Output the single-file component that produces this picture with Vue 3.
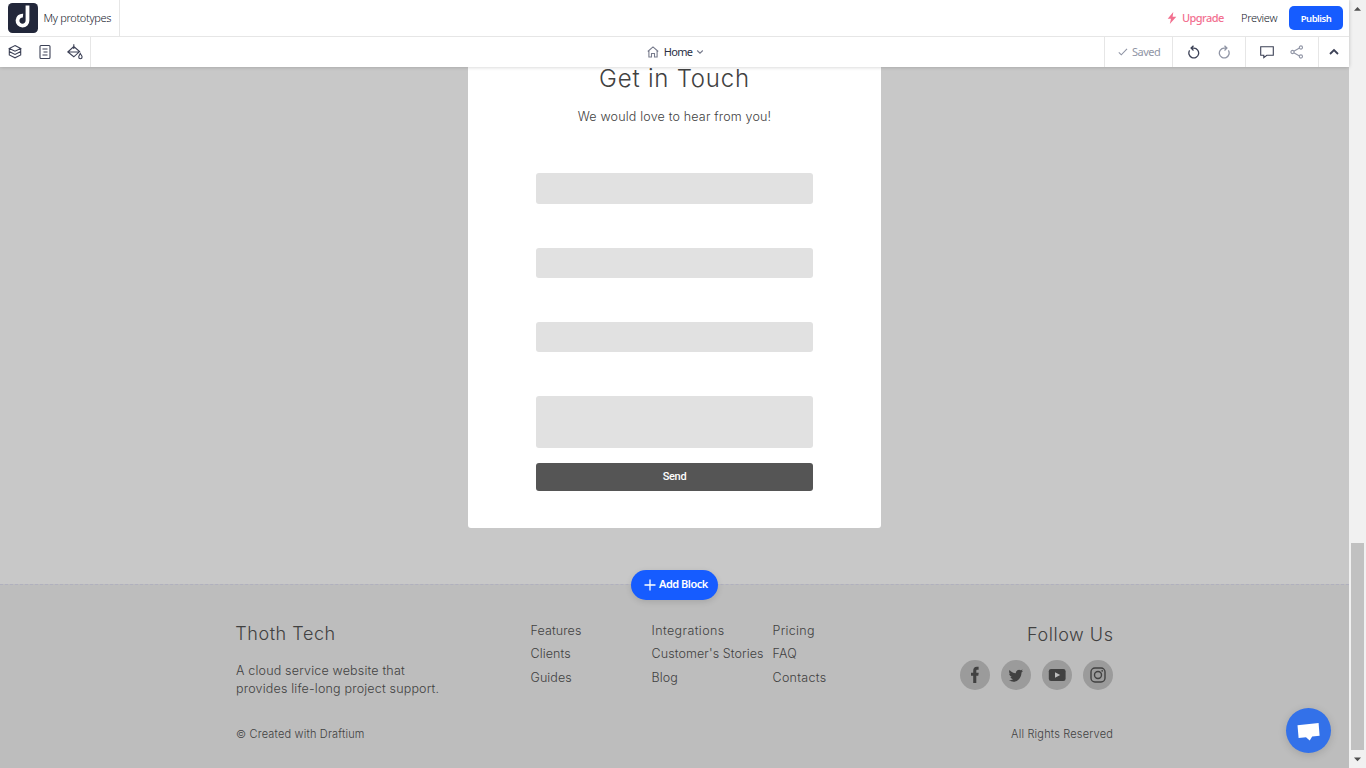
<script setup>
const fields = ['first', 'second', 'third', 'message']
const links = [
  ['Features', 'Clients', 'Guides'],
  ['Integrations', "Customer's Stories", 'Blog'],
  ['Pricing', 'FAQ', 'Contacts']
]
</script>

<template>
  <div class="window">
    <div class="app">
      <header class="header">
        <div class="bar top">
          <div class="brand">
            <svg class="logo" width="30" height="30" viewBox="0 0 30 30">
              <rect width="30" height="30" rx="4.5" fill="#22273a" />
              <path d="M19.5 2.6V17.4A5 5 0 1 1 15 12.6" fill="none" stroke="#fff" stroke-width="3.8" />
            </svg>
            <span class="t-proto">My prototypes</span>
          </div>
          <div class="actions">
            <svg class="bolt" width="10" height="12" viewBox="0 0 10 12"><path d="M6.3 0 .7 6.8H4L2.8 12 9.3 4.8H5.6z" fill="#f2708f" /></svg>
            <span class="t-upgrade">Upgrade</span>
            <span class="t-preview">Preview</span>
            <button class="publish">Publish</button>
          </div>
        </div>
        <div class="bar tools">
          <div class="left-tools">
            <svg width="16" height="16" viewBox="0 0 16 16"><path d="M8 1.6 13.7 4.4 8 7.2 2.3 4.4zM2.3 4.8V7.6L8 10.4 13.7 7.6V4.8M2.3 8V11L8 13.8 13.7 11V8" /></svg>
            <svg width="16" height="16" viewBox="0 0 16 16"><rect x="3" y="1.5" width="10" height="13" rx="1" /><path d="M5.5 5H10.5M6.5 8H10.5M5.5 11H10.5" /></svg>
            <svg width="18" height="16" viewBox="0 0 18 16"><path d="M6.8 .3V5M.8 8 6.8 2.6 12.6 7.6 6.8 12.8zM.8 8H12.3" /><path d="M13.3 9.4C12.4 11.2 11.7 12 11.7 13.1A1.7 1.7 0 0 0 15.1 13.1C15.1 12 14.2 11.2 13.3 9.4z" fill="#fff" /></svg>
          </div>
          <div class="page-picker">
            <svg width="12" height="12" viewBox="0 0 12 12"><path d="M.8 5.5 6 .9 11.2 5.5M1.9 4.8V11H4.5V7.5H7.5V11H10.1V4.8" /></svg>
            <span class="t-home">Home</span>
            <svg class="caret" width="8" height="6" viewBox="0 0 8 6"><path d="M1.2 1.5 4 4.2 6.8 1.5" /></svg>
          </div>
          <div class="right-tools">
            <div class="cell saved">
              <svg width="10" height="8" viewBox="0 0 10 8"><path d="M.8 4.3 3.3 6.8 9 .8" /></svg>
              <span class="t-saved">Saved</span>
            </div>
            <div class="cell history">
              <svg width="14" height="14" viewBox="0 0 14 14"><path d="M2.6 5.4A4.9 4.9 0 1 0 7 3.1H4.2M6.5.7 4.1 3.1 6.5 5.5" /></svg>
              <svg class="muted" width="14" height="14" viewBox="0 0 14 14"><path d="M11.4 5.4A4.9 4.9 0 1 1 7 3.1H9.8M7.5.7 9.9 3.1 7.5 5.5" /></svg>
            </div>
            <div class="cell share">
              <svg width="14" height="14" viewBox="0 0 14 14"><path d="M.7 1.7H13.3V10.2H6.8L3.8 12.6V10.2H.7z" /></svg>
              <svg class="muted" width="14" height="14" viewBox="0 0 14 14"><path d="M3.8 6.2 9.5 3.1M3.8 7.8 9.5 10.9" /><circle cx="2.5" cy="7" r="1.6" /><circle cx="10.9" cy="2.5" r="1.6" /><circle cx="10.9" cy="11.5" r="1.6" /></svg>
            </div>
            <div class="cell collapse">
              <svg width="10" height="8" viewBox="0 0 10 8"><path d="M1 6 5 2 9 6" /></svg>
            </div>
          </div>
        </div>
      </header>

      <main class="contact">
        <section class="card">
          <h1>Get in Touch</h1>
          <p class="lead">We would love to hear from you!</p>
          <form>
            <div v-for="name in fields" :key="name" class="field" :class="name"></div>
            <button type="button" class="send">Send</button>
          </form>
        </section>
      </main>

      <footer class="footer">
        <div class="add-row">
          <button class="add">
            <svg width="12" height="12" viewBox="0 0 12 12"><path d="M6 .5V11.5M.5 6H11.5" /></svg>
            <span>Add Block</span>
          </button>
        </div>
        <div class="columns">
          <div class="about">
            <h2>Thoth Tech</h2>
            <p>A cloud service website that<br>provides life-long project support.</p>
          </div>
          <nav>
            <ul v-for="(group, i) in links" :key="i">
              <li v-for="link in group" :key="link">{{ link }}</li>
            </ul>
          </nav>
          <div class="follow">
            <h2>Follow Us</h2>
            <div class="socials">
              <span><svg width="30" height="30" viewBox="0 0 30 30"><path d="M13.2 23V15.8H11V12.7H13.2V10.9C13.2 8.2 14.6 6.8 16.8 6.8H18.6V9.7H17.4C16.5 9.7 16.3 10.2 16.3 11V12.7H18.7L18.3 15.8H16.3V23z" fill="#414141" /></svg></span>
              <span><svg width="30" height="30" viewBox="0 0 30 30"><path d="M22 10.8 20.5 11.3 21.7 9.5 19.8 10.2A3.3 3.3 0 0 0 14.8 13.2C12.2 13.1 10 11.8 8.5 9.9 7.7 11.4 8.1 13 9.5 14L8.2 13.6C8.2 15.2 9.3 16.5 10.8 16.9H9.4C9.8 18.2 11 18.9 12.3 19 11 20 9.5 20.4 7.8 20.3 13.9 23.9 20.4 20 20.5 12.6A6 6 0 0 0 22 10.8z" fill="#414141" /></svg></span>
              <span><svg width="30" height="30" viewBox="0 0 30 30"><rect x="6.8" y="9" width="16.8" height="12" rx="2.2" fill="#414141" /><path d="M13 12.2V17.8L18.2 15z" fill="#bdbdbd" /></svg></span>
              <span><svg width="30" height="30" viewBox="0 0 30 30"><g fill="none" stroke="#414141" stroke-width="1.4"><rect x="8" y="8" width="14" height="14" rx="4" /><circle cx="15" cy="15" r="3.5" /></g><circle cx="19.2" cy="10.8" r=".9" fill="#414141" /></svg></span>
            </div>
          </div>
        </div>
        <div class="legal"><span>© Created with Draftium</span><span>All Rights Reserved</span></div>
      </footer>

      <button class="chat" aria-label="Chat">
        <svg width="45" height="45" viewBox="0 0 45 45"><path d="M11.5 17.2 32.6 14.9 33.6 27.7 26.2 28.5 23.7 32.5 20 29.2 12.6 29.9z" fill="#fff" /></svg>
      </button>
    </div>
    <div class="scrollbar">
      <svg width="17" height="17" viewBox="0 0 17 17"><path d="M5 10.8 8.5 7 12 10.8z" fill="#505050" /></svg>
      <i class="thumb"></i>
      <svg width="17" height="17" viewBox="0 0 17 17"><path d="M5 6.5 8.5 10.3 12 6.5z" fill="#505050" /></svg>
    </div>
  </div>
</template>

<style>
body { margin: 0; overflow: hidden; }
</style>

<style scoped>
* { box-sizing: border-box; }
svg { display: block; flex: none; }
h1, h2, p, ul { margin: 0; padding: 0; font-weight: 300; }
li { list-style: none; }
button { border: 0; padding: 0; font-family: inherit; }
.window { display: flex; width: 1366px; height: 768px; overflow: hidden; font-family: Inter, sans-serif; color: #414141; }
.app { position: relative; width: 1349px; height: 768px; display: flex; flex-direction: column; }
.header { position: relative; z-index: 2; height: 67px; flex: none; background: #fff; box-shadow: 0 0 4px rgba(0, 0, 0, .22); font-family: "Noto Sans", sans-serif; font-size: 11px; color: #2b3044; }
.bar { display: flex; justify-content: space-between; }
.header span { white-space: nowrap; padding-bottom: 2px; }
.top { height: 37px; border-bottom: 1px solid #e6e6e6; }
.brand { display: flex; align-items: center; width: 120px; padding-left: 8px; gap: 5.5px; border-right: 1px solid #e6e6e6; }
.t-proto { letter-spacing: -.31px; }
.t-proto, .t-preview { font-weight: 350; color: #14182c; }
.actions { display: flex; align-items: center; padding-right: 6px; }
.bolt { margin-right: 5px; }
.t-upgrade { width: 42px; margin-right: 17px; color: #f2708f; font-weight: 500; letter-spacing: -.55px; }
.t-preview { width: 37px; margin-right: 11px; letter-spacing: -.27px; }
.publish { width: 54px; height: 24px; border-radius: 5px; background: #165cff; color: #fff; font-size: 9.5px; font-weight: 600; letter-spacing: -.48px; }
.tools { height: 30px; }
.tools svg { fill: none; stroke: #3c4156; stroke-width: 1.1; }
.left-tools { display: flex; align-items: center; width: 91px; gap: 14px; padding-left: 7px; border-right: 1px solid #e6e6e6; }
.page-picker { display: flex; align-items: center; margin-left: 156px; }
.page-picker svg { stroke: #777b8c; }
.t-home { width: 29px; margin: 0 3px 0 4.5px; letter-spacing: -.7px; }
.right-tools { display: flex; }
.cell { display: flex; align-items: center; border-left: 1px solid #e6e6e6; }
.saved { width: 68px; padding-left: 13px; gap: 4px; color: #9095a5; }
.saved svg, .tools svg.muted { stroke: #9095a5; }
.t-saved { letter-spacing: -.5px; }
.history { width: 73px; padding-left: 14px; gap: 16px; }
.history svg { stroke-width: 1.3; }
.share { width: 73px; padding-left: 14px; gap: 16px; }
.collapse { width: 31px; padding-left: 10px; }
.collapse svg { stroke-width: 1.8; }
.contact { height: 517px; flex: none; background: #c8c8c8; display: flex; justify-content: center; align-items: flex-start; }
.card { width: 413px; height: 461px; padding: 0 68px; background: #fff; border-radius: 0 0 3px 3px; text-align: center; white-space: nowrap; }
h1 { height: 24px; line-height: 24px; font-size: 24px; letter-spacing: .78px; }
.lead { margin-top: 16px; height: 20px; line-height: 20px; font-size: 12.5px; letter-spacing: .18px; }
form { padding-top: 46px; }
.field { height: 30px; margin-bottom: 44px; border-radius: 3px; background: #e1e1e1; }
.field.first { height: 31px; }
.field.message { height: 52px; margin-bottom: 15px; }
.send { display: block; width: 277px; height: 28px; border-radius: 3px; background: #555; color: #fff; font: 500 11px/26px Roboto, sans-serif; letter-spacing: -.3px; }
.footer { flex: 1; background: #bdbdbd; border-top: 1px dashed #b0b0be; }
.add-row { display: flex; justify-content: center; height: 15px; margin-top: -15px; }
.add { display: flex; align-items: center; flex: none; width: 87px; height: 30px; padding: 0 0 0 13px; gap: 3px; border-radius: 15px; background: #165cff; color: #fff; box-shadow: 0 2px 6px rgba(0, 0, 0, .12); font: 600 11px "Noto Sans", sans-serif; letter-spacing: -.48px; white-space: nowrap; }
.add span { padding-bottom: 3px; }
.add svg { fill: none; stroke: #fff; stroke-width: 1.3; }
.columns { display: flex; padding: 36px 236px 0; height: 140px; white-space: nowrap; }
.about { width: 294.5px; }
h2 { font-size: 18px; line-height: 26px; height: 26px; letter-spacing: .55px; margin-right: -.5px; }
.about h2 { margin-left: -.7px; }
.about p { margin-top: 15px; font-size: 12.5px; line-height: 18px; letter-spacing: .18px; }
nav { display: flex; font-size: 12.5px; letter-spacing: .1px; }
ul { width: 121px; }
li { height: 23px; line-height: 20px; }
li:nth-child(2) { height: 24px; }
ul:nth-child(2) li:first-child { letter-spacing: .4px; }
ul:nth-child(3) li { letter-spacing: .3px; }
.follow { margin-left: auto; display: flex; flex-direction: column; align-items: flex-end; }
.follow h2 { height: 39px; line-height: 28px; }
.socials { display: flex; gap: 11px; }
.socials span { width: 30px; height: 30px; border-radius: 50%; background: #9b9b9b; }
.legal { display: flex; justify-content: space-between; padding: 0 236px; font-size: 11px; font-weight: 300; line-height: 18px; letter-spacing: .18px; }
.chat { position: absolute; left: 1286px; top: 708px; width: 45px; height: 45px; border-radius: 50%; background: #3371e9; box-shadow: 0 2px 8px rgba(0, 0, 0, .14); }
.scrollbar { display: flex; flex-direction: column; justify-content: space-between; width: 17px; background: #f1f1f1; }
.thumb { width: 13px; height: 207px; margin: auto auto 1px 2px; background: #c1c1c1; }
</style>
